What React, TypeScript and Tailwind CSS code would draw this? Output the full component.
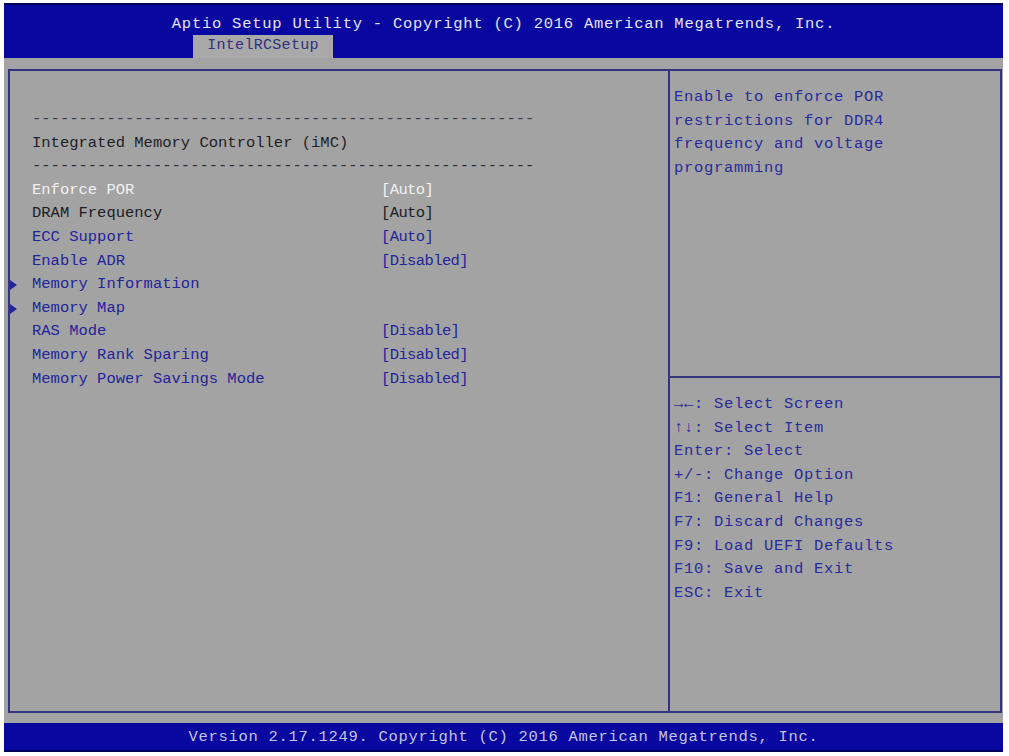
import React from 'react';

type Row = {
  label: string;
  value?: string;
  tone: 'white' | 'dark' | 'blue';
  submenu?: boolean;
};

const ROWS: Row[] = [
  { label: 'Enforce POR', value: '[Auto]', tone: 'white' },
  { label: 'DRAM Frequency', value: '[Auto]', tone: 'dark' },
  { label: 'ECC Support', value: '[Auto]', tone: 'blue' },
  { label: 'Enable ADR', value: '[Disabled]', tone: 'blue' },
  { label: 'Memory Information', tone: 'blue', submenu: true },
  { label: 'Memory Map', tone: 'blue', submenu: true },
  { label: 'RAS Mode', value: '[Disable]', tone: 'blue' },
  { label: 'Memory Rank Sparing', value: '[Disabled]', tone: 'blue' },
  { label: 'Memory Power Savings Mode', value: '[Disabled]', tone: 'blue' },
];

const HELP = ['Enable to enforce POR', 'restrictions for DDR4', 'frequency and voltage', 'programming'];

const KEYS = [
  '\u2192\u2190: Select Screen',
  '\u2191\u2193: Select Item',
  'Enter: Select',
  '+/-: Change Option',
  'F1: General Help',
  'F7: Discard Changes',
  'F9: Load UEFI Defaults',
  'F10: Save and Exit',
  'ESC: Exit',
];

const TONE: Record<Row['tone'], string> = {
  white: 'text-[#f2f2f2]',
  dark: 'text-[#1c1c24]',
  blue: 'text-[#24249a]',
};

const mono = "font-['Liberation_Mono','DejaVu_Sans_Mono',monospace]";

export default function App() {
  return (
    <div className={`h-[756px] w-[1009px] bg-white pl-[4px] pr-[6px] pt-[3px] ${mono}`}>
      {/* title bar */}
      <div className="flex h-[55px] flex-col border-t-2 border-[#00005a] bg-[#0808a0]">
        <div className="mt-[8px] h-[22px] text-center text-[15.5px] leading-[22px] tracking-[0.75px] text-[#e4e4f2]">
          Aptio Setup Utility - Copyright (C) 2016 American Megatrends, Inc.
        </div>
        <div className="mt-auto ml-[189px] flex h-[23px] w-[140px] items-center justify-center bg-[#a9a9a9] text-[15px] tracking-[0.3px] text-[#30307e]">
          IntelRCSetup
        </div>
      </div>

      {/* body */}
      <div className="h-[665px] bg-[#a3a3a3] pl-[4px] pr-[1px] pt-[11px]">
        <div className="flex h-[644px] border-2 border-[#34347c]">
          {/* left pane */}
          <div className="w-[660px] border-r-2 border-[#34347c] pt-[37px] text-[15.5px] leading-[23.6px]">
            <div className="pl-[22px] text-[#3a3a4a]">
              {'-'.repeat(54)}
            </div>
            <div className="pl-[22px] text-[#1e1e26]">Integrated Memory Controller (iMC)</div>
            <div className="pl-[22px] text-[#2a2a36]">
              {'-'.repeat(54)}
            </div>
            {ROWS.map((row) => (
              <div key={row.label} className={`flex items-center ${TONE[row.tone]}`}>
                <div className="flex w-[22px] items-center">
                  {row.submenu ? (
                    <svg width="7" height="10" viewBox="0 0 7 10">
                      <path d="M0 0 L7 5 L0 10 Z" fill="#24249a" />
                    </svg>
                  ) : null}
                </div>
                <div className="w-[349px]">{row.label}</div>
                <div className="tracking-[-0.6px]">{row.value}</div>
              </div>
            ))}
          </div>

          {/* right pane */}
          <div className="flex flex-1 flex-col text-[15.5px] leading-[23.6px] tracking-[0.7px] text-[#2a2a9c]">
            <div className="h-[307px] border-b-2 border-[#34347c] pl-[4px] pt-[15px]">
              {HELP.map((line) => (
                <div key={line}>{line}</div>
              ))}
            </div>
            <div className="pl-[4px] pt-[15px]">
              {KEYS.map((line) => (
                <div key={line}>{line}</div>
              ))}
            </div>
          </div>
        </div>
      </div>

      {/* footer */}
      <div className="flex h-[29px] items-center justify-center border-b-2 border-[#00005a] bg-[#0808a0] pt-[2px] text-[15.5px] tracking-[0.7px] text-[#c4c4e0]">
        Version 2.17.1249. Copyright (C) 2016 American Megatrends, Inc.
      </div>
    </div>
  );
}
